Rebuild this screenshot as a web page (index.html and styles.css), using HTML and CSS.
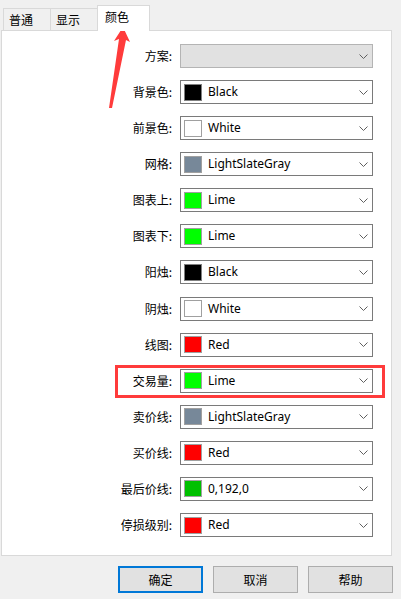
FILE: index.html
```html
<!DOCTYPE html>
<html lang="zh-CN">
<head>
    <meta charset="UTF-8">
    <meta name="viewport" content="width=device-width, initial-scale=1.0">
    <title>属性 - 颜色</title>
    <link rel="stylesheet" href="styles.css">
</head>
<body>

    <div class="tabs">
        <div class="tab">普通</div>
        <div class="tab">显示</div>
        <div class="tab active">颜色</div>
    </div>

    <div class="panel">
        <div class="row">
            <label>方案:</label>
            <div class="combo disabled">
                <span class="value"></span>
                <svg class="chevron" viewBox="0 0 9 5"><path d="M0.5 0.5 L4.5 4.5 L8.5 0.5"/></svg>
            </div>
        </div>
        <div class="row">
            <label>背景色:</label>
            <div class="combo">
                <span class="swatch black"></span><span class="value">Black</span>
                <svg class="chevron" viewBox="0 0 9 5"><path d="M0.5 0.5 L4.5 4.5 L8.5 0.5"/></svg>
            </div>
        </div>
        <div class="row">
            <label>前景色:</label>
            <div class="combo">
                <span class="swatch white"></span><span class="value">White</span>
                <svg class="chevron" viewBox="0 0 9 5"><path d="M0.5 0.5 L4.5 4.5 L8.5 0.5"/></svg>
            </div>
        </div>
        <div class="row">
            <label>网格:</label>
            <div class="combo">
                <span class="swatch slate"></span><span class="value">LightSlateGray</span>
                <svg class="chevron" viewBox="0 0 9 5"><path d="M0.5 0.5 L4.5 4.5 L8.5 0.5"/></svg>
            </div>
        </div>
        <div class="row">
            <label>图表上:</label>
            <div class="combo">
                <span class="swatch lime"></span><span class="value">Lime</span>
                <svg class="chevron" viewBox="0 0 9 5"><path d="M0.5 0.5 L4.5 4.5 L8.5 0.5"/></svg>
            </div>
        </div>
        <div class="row">
            <label>图表下:</label>
            <div class="combo">
                <span class="swatch lime"></span><span class="value">Lime</span>
                <svg class="chevron" viewBox="0 0 9 5"><path d="M0.5 0.5 L4.5 4.5 L8.5 0.5"/></svg>
            </div>
        </div>
        <div class="row">
            <label>阳烛:</label>
            <div class="combo">
                <span class="swatch black"></span><span class="value">Black</span>
                <svg class="chevron" viewBox="0 0 9 5"><path d="M0.5 0.5 L4.5 4.5 L8.5 0.5"/></svg>
            </div>
        </div>
        <div class="row">
            <label>阴烛:</label>
            <div class="combo">
                <span class="swatch white"></span><span class="value">White</span>
                <svg class="chevron" viewBox="0 0 9 5"><path d="M0.5 0.5 L4.5 4.5 L8.5 0.5"/></svg>
            </div>
        </div>
        <div class="row">
            <label>线图:</label>
            <div class="combo">
                <span class="swatch red"></span><span class="value">Red</span>
                <svg class="chevron" viewBox="0 0 9 5"><path d="M0.5 0.5 L4.5 4.5 L8.5 0.5"/></svg>
            </div>
        </div>
        <div class="row">
            <label>交易量:</label>
            <div class="combo">
                <span class="swatch lime"></span><span class="value">Lime</span>
                <svg class="chevron" viewBox="0 0 9 5"><path d="M0.5 0.5 L4.5 4.5 L8.5 0.5"/></svg>
            </div>
        </div>
        <div class="row">
            <label>卖价线:</label>
            <div class="combo">
                <span class="swatch slate"></span><span class="value">LightSlateGray</span>
                <svg class="chevron" viewBox="0 0 9 5"><path d="M0.5 0.5 L4.5 4.5 L8.5 0.5"/></svg>
            </div>
        </div>
        <div class="row">
            <label>买价线:</label>
            <div class="combo">
                <span class="swatch red"></span><span class="value">Red</span>
                <svg class="chevron" viewBox="0 0 9 5"><path d="M0.5 0.5 L4.5 4.5 L8.5 0.5"/></svg>
            </div>
        </div>
        <div class="row">
            <label>最后价线:</label>
            <div class="combo">
                <span class="swatch green"></span><span class="value">0,192,0</span>
                <svg class="chevron" viewBox="0 0 9 5"><path d="M0.5 0.5 L4.5 4.5 L8.5 0.5"/></svg>
            </div>
        </div>
        <div class="row">
            <label>停损级别:</label>
            <div class="combo">
                <span class="swatch red"></span><span class="value">Red</span>
                <svg class="chevron" viewBox="0 0 9 5"><path d="M0.5 0.5 L4.5 4.5 L8.5 0.5"/></svg>
            </div>
        </div>
    </div>

    <div class="buttons">
        <button class="btn default">确定</button>
        <button class="btn">取消</button>
        <button class="btn">帮助</button>
    </div>

    <!-- 标注 -->
    <div class="highlight"></div>
    <svg class="arrow" viewBox="0 0 401 120" width="401" height="120">
        <polygon points="123,27 130,42 126,40 112,108 109,108 119,39 114,41"/>
    </svg>

</body>
</html>
```

FILE: styles.css
```css
body {
    margin: 0;
    background-color: #f0f0f0;
    font-family: "Noto Sans", "Noto Sans CJK SC", sans-serif;
    font-size: 12px;
    color: #000;
    position: relative;
    height: 599px;
    overflow: hidden;
}

/* 选项卡 */
.tabs {
    display: flex;
    align-items: flex-end;
    height: 30px;
    padding-left: 3px;
}
.tab {
    box-sizing: border-box;
    width: 48px;
    height: 22px;
    margin-right: -1px;
    border: 1px solid #d9d9d9;
    border-bottom: none;
    background-color: #f0f0f0;
    font-family: "Noto Sans CJK SC", sans-serif;
    padding-left: 5px;
    line-height: 21px;
}
.tab.active {
    position: relative;
    z-index: 2;
    width: 53px;
    height: 26px;
    margin-bottom: -1px;
    background-color: #fff;
    padding-left: 7px;
    line-height: 21px;
}

.panel {
    box-sizing: border-box;
    width: 391px;
    height: 526px;
    margin-left: 1px;
    background-color: #fff;
    border: 1px solid #d9d9d9;
    padding: 13px 18px 0 0;
    display: flex;
    flex-direction: column;
    gap: 12.08px;
}
.row {
    display: grid;
    grid-template-columns: 1fr 193px;
    align-items: center;
}
.row label {
    text-align: right;
    padding-right: 8px;
    font-family: "Noto Sans CJK SC", sans-serif;
    line-height: 14px;
}

.combo {
    box-sizing: border-box;
    height: 24px;
    border: 1px solid #7a7a7a;
    background-color: #fff;
    display: flex;
    align-items: center;
    padding-left: 3px;
    padding-right: 4px;
}
.combo.disabled {
    background-color: #e1e1e1;
    border-color: #b4b4b4;
}
.swatch {
    box-sizing: border-box;
    width: 18px;
    height: 17px;
    border: 1px solid #a0a0a0;
    margin-right: 6px;
}
.black { background-color: #000; border-color: #808080; }
.white { background-color: #fff; }
.slate { background-color: #778899; }
.lime { background-color: #00ff00; }
.red { background-color: #ff0000; }
.green { background-color: #00c000; }
.value {
    flex: 1;
    line-height: 16px;
}
.chevron {
    width: 9px;
    height: 5px;
    fill: none;
    stroke: #606060;
    stroke-width: 1;
}

/* 按钮 */
.buttons {
    display: flex;
    justify-content: flex-end;
    gap: 10px;
    padding-right: 8px;
    margin-top: 10px;
}
.btn {
    box-sizing: border-box;
    width: 85px;
    height: 27px;
    border: 1px solid #adadad;
    background-color: #e1e1e1;
    font-family: "Noto Sans CJK SC", sans-serif;
    font-size: 12px;
    color: #000;
    padding: 0;
}
.btn.default {
    border: 2px solid #0078d7;
}

/* 标注 */
.highlight {
    position: absolute;
    left: 115px;
    top: 365px;
    width: 270px;
    height: 33px;
    box-sizing: border-box;
    border: 3px solid #ff3b3b;
}
.arrow {
    position: absolute;
    left: 0;
    top: 0;
    fill: #ff3b3b;
}
```
